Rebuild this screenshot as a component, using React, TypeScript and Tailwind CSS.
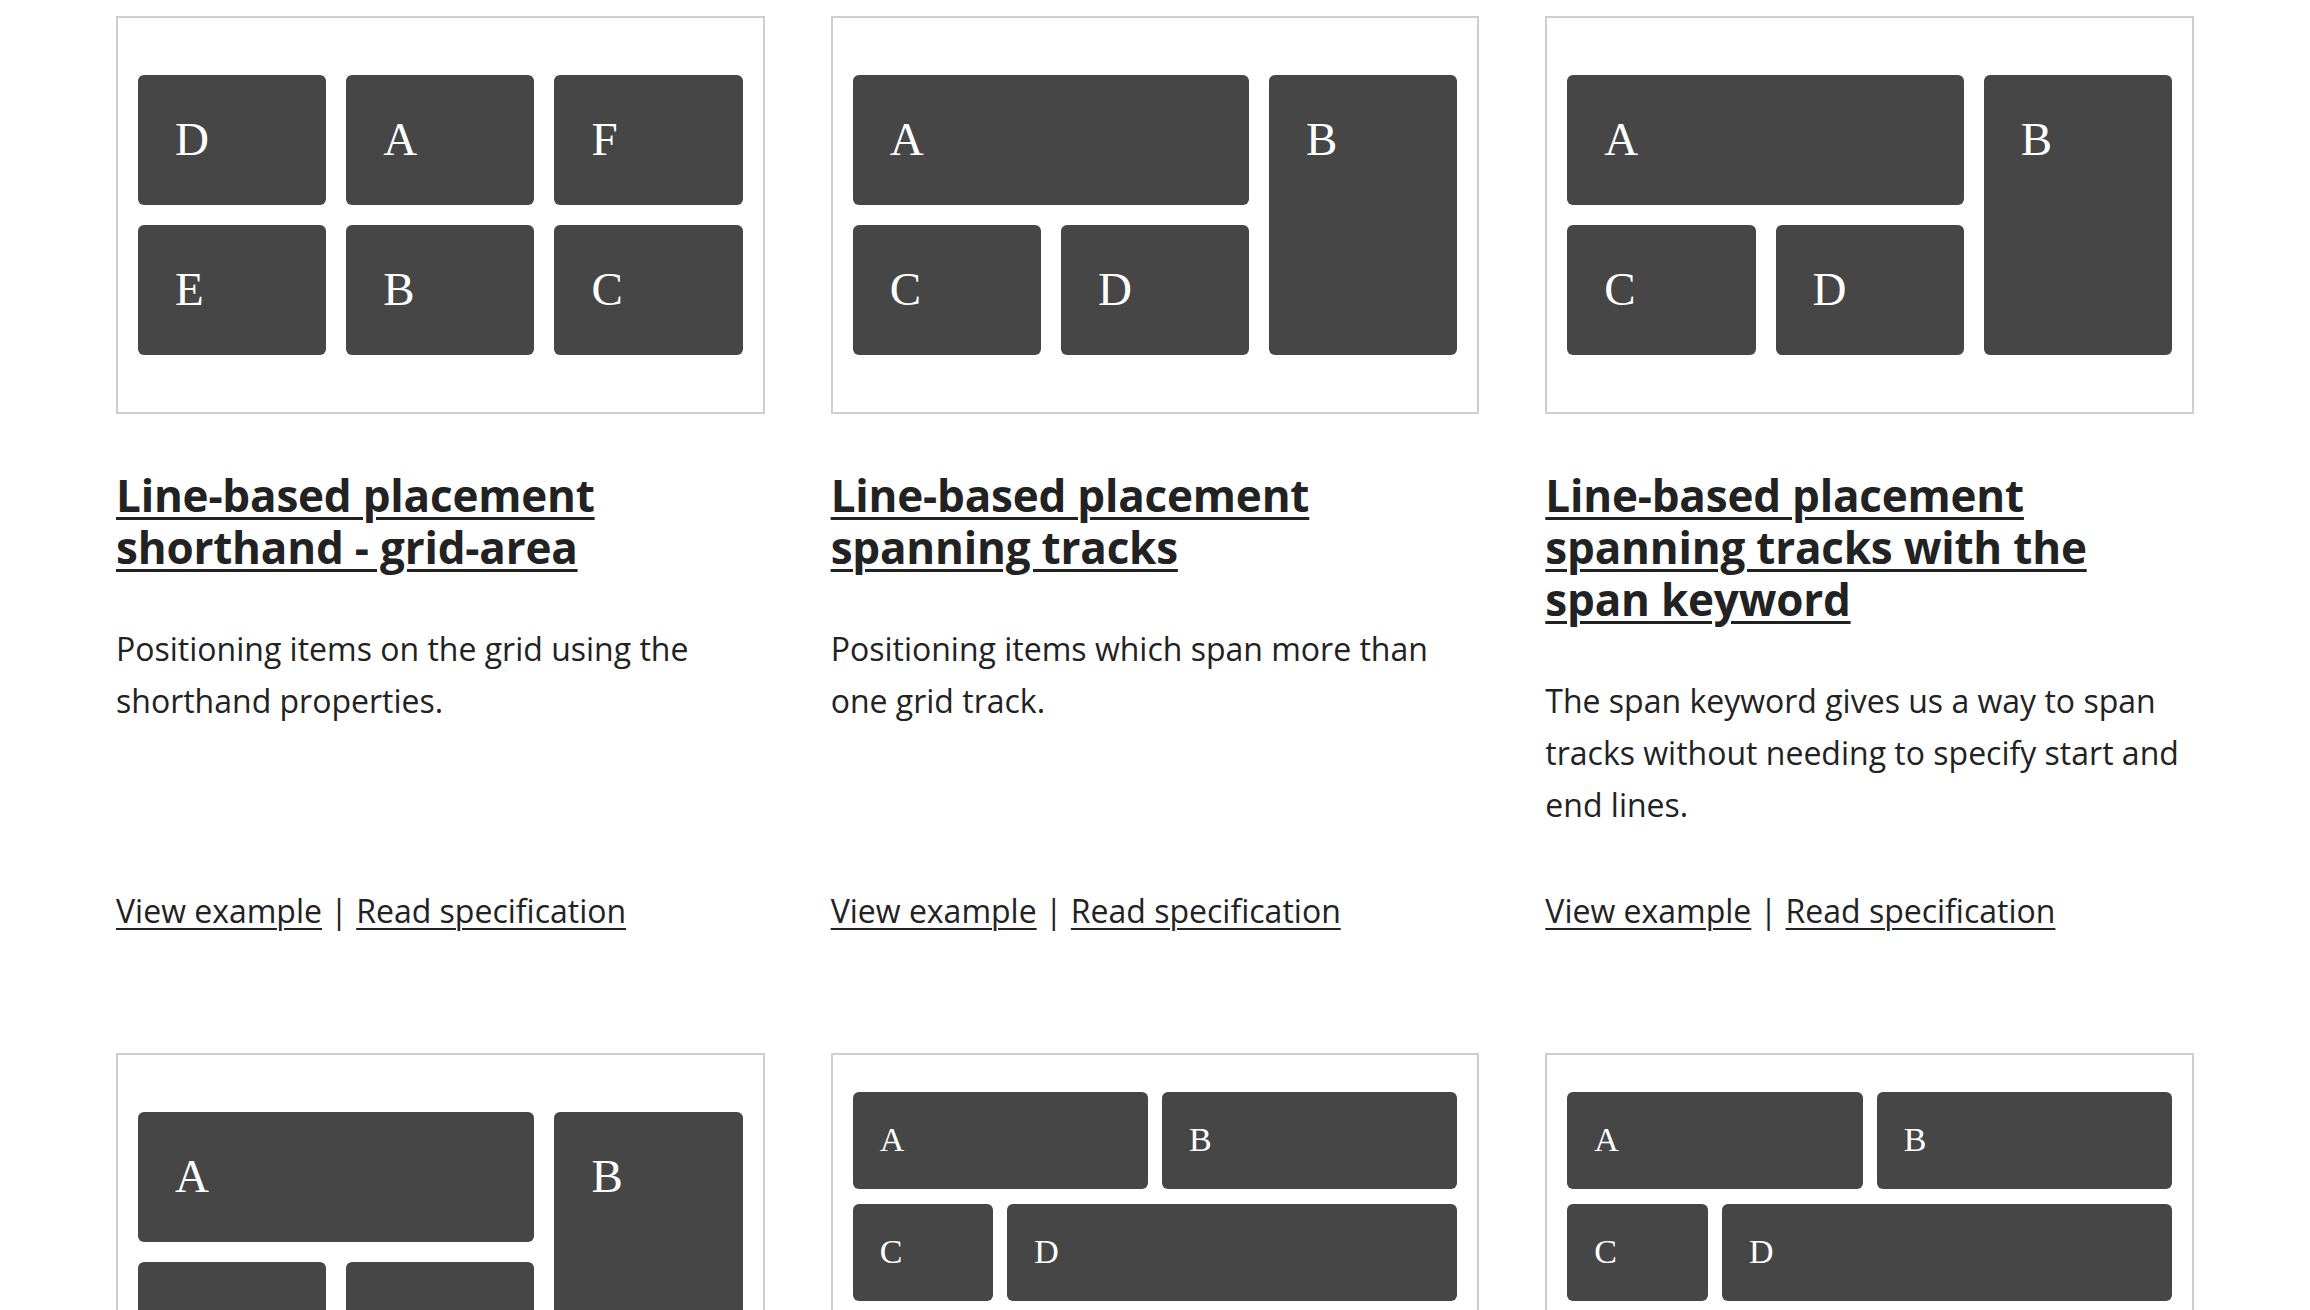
type Cell = { label: string; span?: string };

type Example = {
  title: string;
  text: string;
  grid: string;
  size: 'lg' | 'sm';
  cells: Cell[];
};

const spanning: Cell[] = [
  { label: 'A', span: 'col-span-2' },
  { label: 'B', span: 'row-span-2' },
  { label: 'C' },
  { label: 'D' },
];

const examples: Example[] = [
  {
    title: 'Line-based placement shorthand - grid-area',
    text: 'Positioning items on the grid using the shorthand properties.',
    grid: 'grid-cols-3 grid-rows-[130px_130px] gap-5',
    size: 'lg',
    cells: [{ label: 'D' }, { label: 'A' }, { label: 'F' }, { label: 'E' }, { label: 'B' }, { label: 'C' }],
  },
  {
    title: 'Line-based placement spanning tracks',
    text: 'Positioning items which span more than one grid track.',
    grid: 'grid-cols-3 grid-rows-[130px_130px] gap-5',
    size: 'lg',
    cells: spanning,
  },
  {
    title: 'Line-based placement spanning tracks with the span keyword',
    text: 'The span keyword gives us a way to span tracks without needing to specify start and end lines.',
    grid: 'grid-cols-3 grid-rows-[130px_130px] gap-5',
    size: 'lg',
    cells: spanning,
  },
  {
    title: 'Line-based placement with negative line numbers',
    text: 'Counting lines back from the end of the explicit grid.',
    grid: 'grid-cols-3 grid-rows-[130px_130px] gap-5',
    size: 'lg',
    cells: spanning,
  },
  {
    title: 'Grid auto-placement',
    text: 'Items that are not placed fill the empty cells of the grid.',
    grid: 'grid-cols-4 grid-rows-[97px_97px_97px] gap-x-[14px] gap-y-[15px]',
    size: 'sm',
    cells: [
      { label: 'A', span: 'col-span-2' },
      { label: 'B', span: 'col-span-2' },
      { label: 'C' },
      { label: 'D', span: 'col-span-3' },
      { label: 'E', span: 'col-span-3' },
      { label: 'F' },
    ],
  },
  {
    title: 'Grid auto-placement with dense packing',
    text: 'Backfilling the holes left in the grid by spanning items.',
    grid: 'grid-cols-4 grid-rows-[97px_97px_97px] gap-x-[14px] gap-y-[15px]',
    size: 'sm',
    cells: [
      { label: 'A', span: 'col-span-2' },
      { label: 'B', span: 'col-span-2' },
      { label: 'C' },
      { label: 'D', span: 'col-span-3' },
      { label: 'E' },
      { label: 'F', span: 'col-span-3' },
    ],
  },
];

const Preview = ({ example }: { example: Example }) => (
  <div className="h-[398px] border-2 border-[#cecece] bg-white flex items-center px-[20px]">
    <div className={`grid w-full ${example.grid}`}>
      {example.cells.map((cell) => (
        <div
          key={cell.label}
          className={`bg-[#464646] rounded-[6px] text-white font-['Liberation_Serif',serif] leading-none ${
            example.size === 'lg' ? 'text-[47px] pt-[41px] pl-[37px]' : 'text-[34px] pt-[31px] pl-[27px]'
          } ${cell.span ?? ''}`}
        >
          {cell.label}
        </div>
      ))}
    </div>
  </div>
);

export default function App() {
  return (
    <div className="min-h-screen bg-white text-[#222] font-['Open_Sans',sans-serif] px-[116px] pt-[16px]">
      <div className="grid grid-cols-3 gap-x-[66px] gap-y-[116px]">
        {examples.map((example) => (
          <div key={example.title} className="flex flex-col">
            <Preview example={example} />
            <h2 className="mt-[55px] text-[44px] leading-[52px] font-bold tracking-[-0.2px]">
              <a href="#" className="underline decoration-[3px] underline-offset-[5px]">
                {example.title}
              </a>
            </h2>
            <p className="mt-[50px] mb-[54px] text-[32px] leading-[52px]">{example.text}</p>
            <p className="mt-auto text-[32px] leading-[52px]">
              <a href="#" className="underline decoration-2 underline-offset-[5px]">View example</a>
              {' | '}
              <a href="#" className="underline decoration-2 underline-offset-[5px]">Read specification</a>
            </p>
          </div>
        ))}
      </div>
    </div>
  );
}
